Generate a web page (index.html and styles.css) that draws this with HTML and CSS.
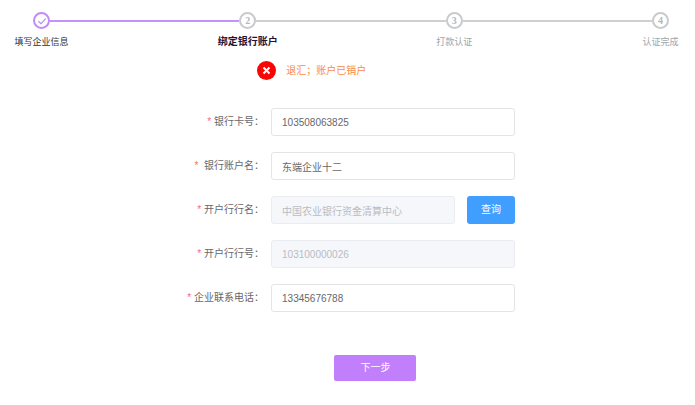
FILE: index.html
```html
<!DOCTYPE html>
<html lang="zh-CN">
<head>
<meta charset="utf-8">
<meta name="viewport" content="width=device-width, initial-scale=1">
<title>绑定银行账户</title>
<link rel="stylesheet" href="styles.css">
</head>
<body>
<ol class="steps">
  <li class="step done">
    <span class="mark"><svg class="tick" viewBox="0 0 10 10" aria-hidden="true"><path d="M1.5 5.3 L4 7.6 L8.7 2.7"/></svg></span>
    <span class="line"></span>
    <span class="name">填写企业信息</span>
  </li>
  <li class="step current">
    <span class="mark">2</span>
    <span class="line"></span>
    <span class="name">绑定银行账户</span>
  </li>
  <li class="step">
    <span class="mark">3</span>
    <span class="line"></span>
    <span class="name">打款认证</span>
  </li>
  <li class="step last">
    <span class="mark">4</span>
    <span class="name">认证完成</span>
  </li>
</ol>

<p class="alert" role="alert">
  <svg class="alert-icon" viewBox="0 0 19 19" aria-hidden="true"><circle cx="9.5" cy="9.5" r="9.5"/><path d="M6.5 6.5 L12.5 12.5 M12.5 6.5 L6.5 12.5"/></svg>
  <span>退汇；账户已销户</span>
</p>

<form class="form">
  <div class="row">
    <label for="card"><span class="star">*</span> 银行卡号：</label>
    <input id="card" type="text" value="103508063825" required>
  </div>
  <div class="row">
    <label for="holder"><span class="star">*</span>&nbsp; 银行账户名：</label>
    <input id="holder" type="text" value="东端企业十二" required>
  </div>
  <div class="row">
    <label for="branch"><span class="star">*</span> 开户行行名：</label>
    <div class="lookup">
      <input id="branch" type="text" value="中国农业银行资金清算中心" disabled>
      <button class="query" type="button">查询</button>
    </div>
  </div>
  <div class="row">
    <label for="code"><span class="star">*</span> 开户行行号：</label>
    <input id="code" type="text" value="103100000026" disabled>
  </div>
  <div class="row">
    <label for="phone"><span class="star">*</span> 企业联系电话：</label>
    <input id="phone" type="tel" value="13345676788" required>
  </div>
  <div class="row actions">
    <button class="next" type="submit">下一步</button>
  </div>
</form>
</body>
</html>
```
FILE: styles.css
```css
* {
  box-sizing: border-box;
}

body {
  margin: 0;
  padding-top: 12px;
  background: #fff;
  color: #66686c;
  font: 10px/14px "Liberation Sans", "Noto Sans CJK SC", sans-serif;
}

/* Progress steps */
.steps {
  display: flex;
  margin: 0;
  padding: 0 26px 0 33px;
  list-style: none;
}

.step {
  flex: 1;
  display: grid;
  grid-template-columns: 17px 1fr;
  align-items: center;
  row-gap: 6px;
  color: #a0a3a8;
}

.step.last {
  flex: none;
  grid-template-columns: 17px;
}

.mark {
  display: flex;
  align-items: center;
  justify-content: center;
  height: 17px;
  border: 2px solid #c8cacd;
  border-radius: 50%;
  color: #b4b7bc;
  font: bold 10px/13px "Liberation Serif", serif;
}

.line {
  height: 2px;
  background: #cfd0d2;
}

.name {
  grid-column: 1;
  justify-self: center;
  font-size: 9px;
  white-space: nowrap;
}

.done {
  color: #303133;
}

.done .mark {
  border-color: #c08cf8;
}

.done .line {
  background: #c492fc;
}

.tick {
  width: 10px;
  height: 10px;
  fill: none;
  stroke: #b88af0;
  stroke-width: 1.2;
}

.current .name {
  color: #2a1030;
  font-size: 10px;
  font-weight: bold;
}

/* Rejection notice */
.alert {
  display: flex;
  align-items: center;
  gap: 10px;
  margin: 12px 0 0;
  padding-left: 37%;
  color: #f78c46;
}

.alert-icon {
  width: 19px;
  height: 19px;
  fill: #f80505;
}

.alert-icon path {
  stroke: #fff;
  stroke-width: 2;
}

/* Account form */
.form {
  display: grid;
  gap: 16px;
  margin-top: 28px;
}

.row {
  display: grid;
  grid-template-columns: 39% 35.1%;
  align-items: center;
}

label {
  padding-right: 7px;
  text-align: right;
}

.star {
  color: #f56c6c;
}

input,
button {
  height: 28px;
  border-radius: 3px;
  font: inherit;
}

input {
  width: 100%;
  min-width: 0;
  padding: 0 10px;
  border: 1px solid #e2e4e8;
  background: #fff;
  color: #66686c;
}

input:disabled {
  border-color: #eaecf1;
  background: #f5f7fa;
  color: #b8bcc4;
}

.lookup {
  display: flex;
  gap: 12px;
}

button {
  border: 0;
  color: #fff;
}

.query {
  flex: none;
  padding: 0 14px;
  background: #409eff;
}

.actions {
  margin-top: 27px;
}

.next {
  grid-column: 2;
  justify-self: start;
  height: 26px;
  margin-left: 26%;
  padding: 0 26px;
  border-radius: 2px;
  background: #c27ffc;
}
```
